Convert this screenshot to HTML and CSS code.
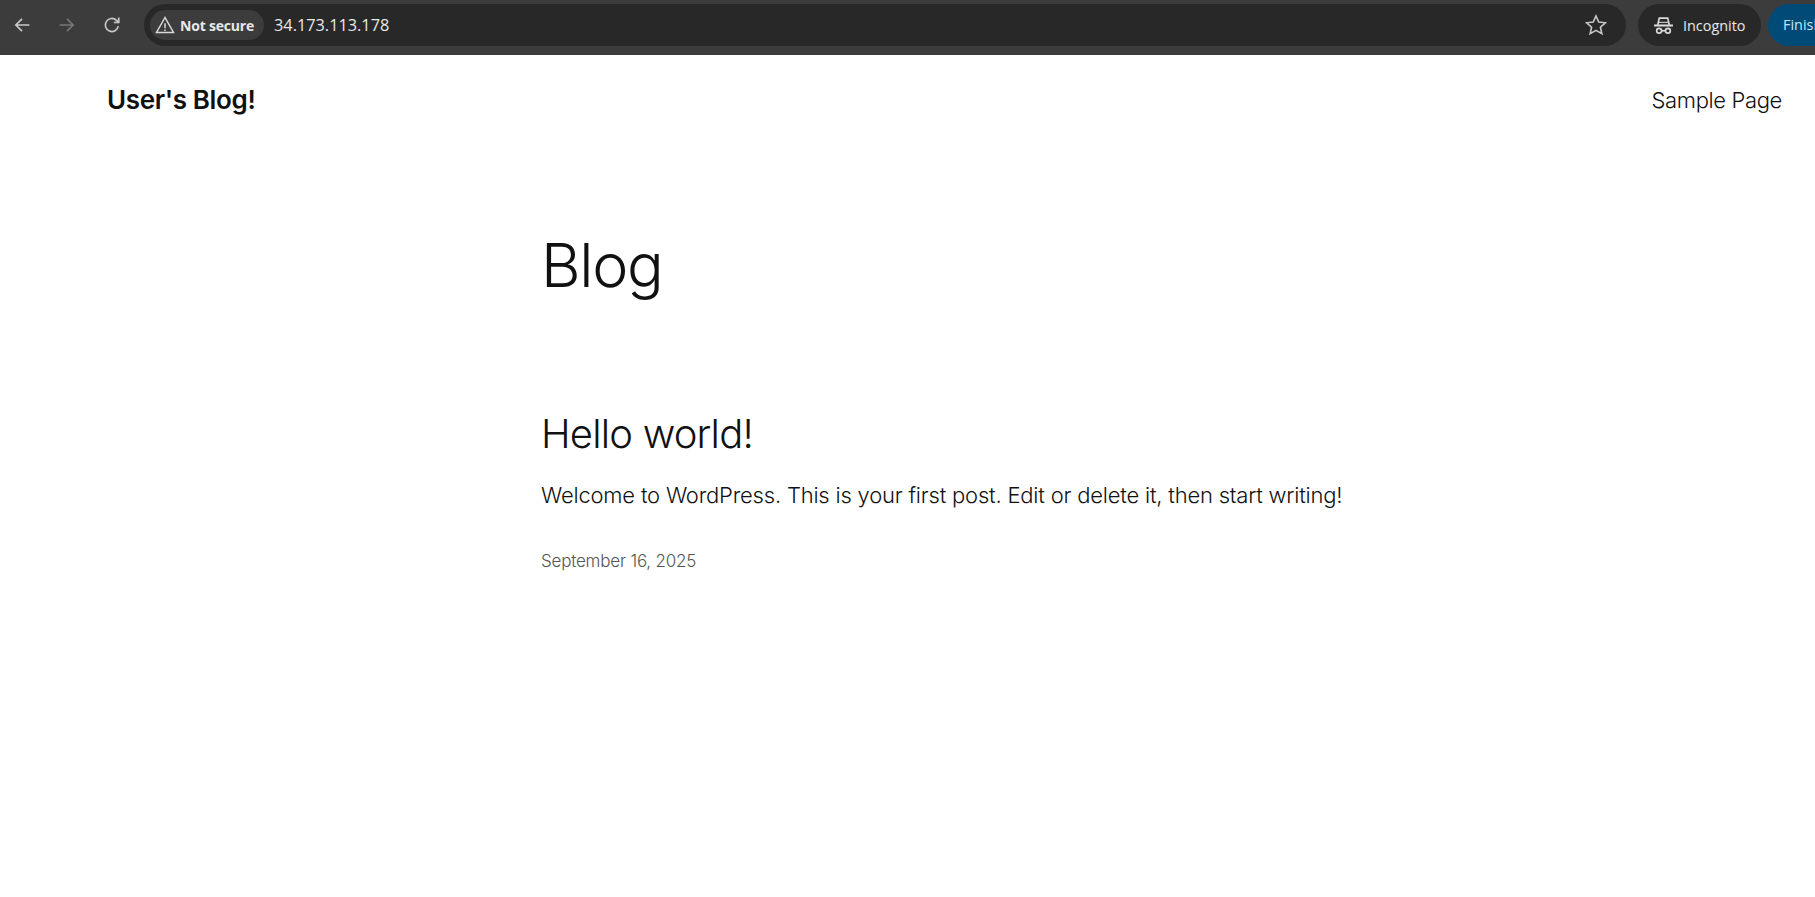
FILE: index.html
```html
<!DOCTYPE html>
<html lang="en">
<head>
    <meta charset="UTF-8">
    <title>User's Blog!</title>
    <link rel="stylesheet" href="styles.css">
</head>
<body>

<div class="toolbar">
    <div class="nav-buttons">
        <svg class="nav-icon" viewBox="0 0 16 16"><path d="M14.5 8H2.5M8 2.5L2.5 8 8 13.5"/></svg>
        <svg class="nav-icon dim" viewBox="0 0 16 16"><path d="M1.5 8h12M8 2.5L13.5 8 8 13.5"/></svg>
        <svg class="nav-icon" viewBox="0 0 16 16"><path d="M13.6 9A5.8 5.8 0 1 1 12 3.9L13.8 5.6M14 1.4v4.4H9.6"/></svg>
    </div>
    <div class="omnibox">
        <div class="security-chip">
            <svg class="warn-icon" viewBox="0 0 16 16"><path d="M8 2L1.2 14h13.6zM8 6.5v4M8 11.5v1.2"/></svg>
            <span>Not secure</span>
        </div>
        <span class="url">34.173.113.178</span>
        <svg class="star-icon" viewBox="0 0 20 20"><path d="M10 1.8l2.5 5.5 6 .7-4.5 4 1.3 5.9-5.3-3-5.3 3L6 12 1.5 8l6-.7z"/></svg>
    </div>
    <div class="incognito">
        <svg class="hat-icon" viewBox="0 0 20 20"><path class="brim" d="M1 10h18"/><path d="M4.5 9.5L6 3h8l1.5 6.5"/><path class="band" d="M5 7h10"/><circle cx="5.8" cy="15" r="2.3"/><circle cx="14.2" cy="15" r="2.3"/><path d="M8.1 15h3.8"/></svg>
        <span>Incognito</span>
    </div>
    <div class="finish">Finish update</div>
</div>

<header class="site-header">
    <a class="site-title" href="#">User's Blog!</a>
    <a class="nav-link" href="#">Sample Page</a>
</header>

<main class="content">
    <h1>Blog</h1>
    <article class="post">
        <h2>Hello world!</h2>
        <p>Welcome to WordPress. This is your first post. Edit or delete it, then start writing!</p>
        <div class="post-date">September 16, 2025</div>
    </article>
</main>

</body>
</html>
```

FILE: styles.css
```css
html, body {
    margin: 0;
    height: 100%;
    overflow: hidden;
}

body {
    font-family: Inter, "Liberation Sans", sans-serif;
    background-color: #fff;
    color: #111;
}

/* browser bar */
.toolbar {
    height: 55px;
    box-sizing: border-box;
    padding: 4px 0 9px 0;
    background-color: #3c3c3c;
    display: flex;
    align-items: center;
    overflow: hidden;
    font-family: "Open Sans", sans-serif;
    color: #e8e8e8;
}

.nav-buttons {
    display: flex;
    align-items: center;
    gap: 27px;
    padding-left: 13px;
    width: 131px;
    box-sizing: border-box;
    margin-right: 13px;
    flex-shrink: 0;
}

.nav-icon {
    width: 18px;
    height: 18px;
    fill: none;
    stroke: #c7c7c7;
    stroke-width: 1.5;
}

.nav-icon.dim {
    stroke: #777;
}

.omnibox {
    width: 1482px;
    height: 42px;
    box-sizing: border-box;
    background-color: #282828;
    border-radius: 21px;
    display: flex;
    align-items: center;
    padding: 0 19px 0 6px;
    flex-shrink: 0;
}

.security-chip {
    height: 30px;
    box-sizing: border-box;
    background-color: #3c3c3c;
    border-radius: 15px;
    display: flex;
    align-items: center;
    gap: 5px;
    padding: 0 10px 0 5px;
    font-size: 14px;
    font-weight: 700;
    letter-spacing: -0.2px;
}

.warn-icon {
    width: 20px;
    height: 20px;
    fill: none;
    stroke: #d8d8d8;
    stroke-width: 1.2;
}

.url {
    margin-left: 10px;
    font-size: 16.3px;
    flex: 1;
}

.star-icon {
    width: 22px;
    height: 22px;
    fill: none;
    stroke: #c7c7c7;
    stroke-width: 1.5;
}

.incognito {
    margin-left: 12px;
    width: 123px;
    height: 42px;
    box-sizing: border-box;
    background-color: #282828;
    border-radius: 21px;
    display: flex;
    align-items: center;
    gap: 9px;
    padding-left: 15px;
    font-size: 14.4px;
    flex-shrink: 0;
}

.hat-icon {
    width: 21px;
    height: 21px;
    fill: none;
    stroke: #d8d8d8;
    stroke-width: 1.6;
}

.hat-icon .brim {
    stroke-width: 2;
}

.hat-icon .band {
    stroke-width: 1;
}

.finish {
    margin-left: 7px;
    height: 42px;
    line-height: 42px;
    padding: 0 15px;
    background-color: #004a77;
    border-radius: 21px 0 0 21px;
    color: #c2e7ff;
    font-size: 14.4px;
    white-space: nowrap;
    flex-shrink: 0;
}

/* site */
.site-header {
    display: flex;
    justify-content: space-between;
    align-items: center;
    padding: 0 33px 0 107px;
    height: 90px;
}

.site-title {
    font-size: 26px;
    font-weight: 600;
    letter-spacing: -0.35px;
    color: #111;
    text-decoration: none;
    margin-bottom: 2px;
}

.nav-link {
    font-size: 22px;
    font-weight: 300;
    letter-spacing: -0.36px;
    color: #111;
    text-decoration: none;
}

.content {
    padding: 0 0 0 541px;
}

.content h1 {
    margin: 0;
    padding-top: 81px;
    font-size: 61px;
    line-height: 78px;
    font-weight: 300;
    letter-spacing: -1.3px;
}

.post {
    margin-top: 102px;
}

.post h2 {
    margin: 0;
    font-size: 40px;
    line-height: 56px;
    font-weight: 300;
    letter-spacing: -0.8px;
}

.post p {
    margin: 16px 0 0 0;
    font-size: 22px;
    line-height: 34px;
    font-weight: 300;
    letter-spacing: -0.2px;
}

.post-date {
    margin-top: 36px;
    font-size: 17px;
    line-height: 26px;
    font-weight: 300;
    color: #555;
    letter-spacing: -0.2px;
}
```
